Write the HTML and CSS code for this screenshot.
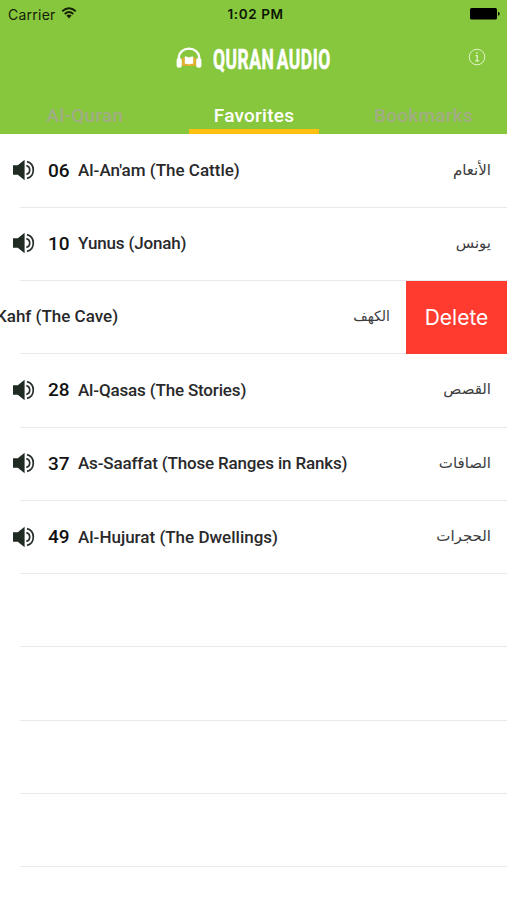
FILE: index.html
```html
<!DOCTYPE html>
<html lang="en">
<head>
<meta charset="utf-8">
<title>Quran Audio</title>
<link rel="stylesheet" href="styles.css">
</head>
<body>
<svg width="0" height="0" class="defs">
  <symbol id="speaker" viewBox="0 0 24 24">
    <path fill="#202b24" d="M1 7.300h4.800L12.600 1.800v20.400L5.800 16.700H1z"/>
    <path fill="none" stroke="#27302b" stroke-width="1.700" d="M14.300 7.600q3.400.8 3.400 4.400t-3.400 4.400M15 3.600q6.300 1.700 6.300 8.400t-6.300 8.400"/>
  </symbol>
</svg>
<header class="header">
  <div class="status">
    <div class="carrier">Carrier
      <svg width="16" height="12" viewBox="0 0 16 12"><path fill="none" stroke="#142008" stroke-width="1.900" d="M1.200 4.300Q8-1.700 14.800 4.300M3.700 7Q8 3.200 12.300 7"/><path fill="#142008" d="M5.400 8.600Q8 6.600 10.600 8.600L8 11.400z"/></svg>
    </div>
    <div class="clock">1:02 PM</div>
    <svg class="battery" width="30" height="12" viewBox="0 0 30 12"><rect width="27" height="11.500" rx="1.600"/><path d="M28 3.800q1.700.4 1.700 2t-1.700 2z"/></svg>
  </div>
  <div class="brand">
    <svg class="logo" width="26" height="22" viewBox="0 0 26 22">
      <path fill="#dfb02f" d="M6 10.500h14v8.500H6z"/>
      <path fill="#fff" d="M8.800 9.500q2.700-.3 4.200 1.200 1.500-1.500 4.200-1.200v7.300q-2.700-.3-4.200.8-1.500-1.100-4.200-.8z"/>
      <path fill="none" stroke="#fff" stroke-width="2.200" d="M2.700 13V11.500C2.700-1.600 23.300-1.600 23.300 11.500V13"/>
      <rect x=".6" y="11" width="5.200" height="9.800" rx="2.200" fill="#fff"/><rect x="20.200" y="11" width="5.200" height="9.800" rx="2.200" fill="#fff"/>
    </svg>
    <h1 class="title"><span>QURAN AUDIO</span></h1>
    <svg class="info" width="18" height="18" viewBox="0 0 18 18"><circle cx="9" cy="9" r="7.800" fill="none" stroke="#e0f2c7"/><path fill="none" stroke="#e0f2c7" stroke-width="1.300" d="M7.500 7.600h1.700v5.200M7.200 12.900h4M8.200 5h1.500"/></svg>
  </div>
  <nav class="tabs">
    <div class="tab quran"><span>Al-Quran</span></div>
    <div class="tab active"><span>Favorites</span></div>
    <div class="tab bookmarks"><span>Bookmarks</span></div>
  </nav>
</header>
<main class="list">
  <div class="row"><svg class="spk"><use href="#speaker"/></svg><b class="num">06</b><span class="name">Al-An'am (The Cattle)</span><span class="arabic" lang="ar">الأنعام</span></div>
  <div class="row"><svg class="spk"><use href="#speaker"/></svg><b class="num">10</b><span class="name tight">Yunus (Jonah)</span><span class="arabic" lang="ar">يونس</span></div>
  <div class="row swiped"><span class="name">Kahf (The Cave)</span><span class="arabic" lang="ar">الكهف</span><div class="delete">Delete</div></div>
  <div class="row"><svg class="spk"><use href="#speaker"/></svg><b class="num">28</b><span class="name tight">Al-Qasas (The Stories)</span><span class="arabic" lang="ar">القصص</span></div>
  <div class="row"><svg class="spk"><use href="#speaker"/></svg><b class="num">37</b><span class="name tight">As-Saaffat (Those Ranges in Ranks)</span><span class="arabic" lang="ar">الصافات</span></div>
  <div class="row"><svg class="spk"><use href="#speaker"/></svg><b class="num">49</b><span class="name">Al-Hujurat (The Dwellings)</span><span class="arabic" lang="ar">الحجرات</span></div>
  <div class="row"></div><div class="row"></div><div class="row"></div><div class="row"></div>
</main>
</body>
</html>
```
FILE: styles.css
```css
* { box-sizing: border-box; }
body { margin: 0; height: 900px; overflow: hidden; background: #fff; font-family: Roboto, "Liberation Sans", sans-serif; }
.defs { position: absolute; }
.header { height: 134px; background: #87c73d; }
.status { height: 28px; display: grid; grid-template-columns: 1fr auto 1fr; align-items: center; padding: 0 7px 0 8px; font-family: Inter, sans-serif; font-size: 14px; color: #142008; }
.carrier { display: flex; align-items: center; gap: 6px; letter-spacing: .25px; }
.carrier svg { margin: -2px 0 0 -1px; }
.clock { margin-left: 3px; font-weight: 600; font-size: 13.500px; letter-spacing: .6px; color: #0b1604; }
.battery { justify-self: end; }
.brand { height: 62px; display: flex; align-items: center; padding: 0 21px 0 176px; }
.logo { margin-top: -3px; }
.title { margin: 2px 0 0 11px; width: 118px; font: 700 28.500px/30px Roboto, sans-serif; color: #fff; white-space: nowrap; }
.title span { display: inline-block; letter-spacing: .9px; word-spacing: -4px; transform: scaleX(.61); transform-origin: left; -webkit-text-stroke: .6px #fff; }
.info { margin-left: auto; margin-top: -4px; }
.tabs { height: 44px; display: grid; grid-template-columns: 170px 168px 169px; justify-items: center; font-size: 19px; font-weight: 500; color: #a1ac84; }
.tab { width: 130px; height: 44px; line-height: 51px; text-align: center; letter-spacing: .25px; border-bottom: 5px solid transparent; }
.bookmarks { padding-left: 2px; }
.active { color: #fff; border-color: #fdc010; }
.list { padding-top: .4px; }
.row { display: flex; align-items: center; height: 73.300px; padding: 0 16px 2px 12px; background: linear-gradient(#e9e9eb, #e9e9eb) 20px 100% / 100% 1px no-repeat; }
.spk { width: 24px; height: 24px; flex: none; }
.num { width: 30px; margin-left: 12px; font-size: 19px; font-weight: 500; color: #111; }
.name { font-size: 17px; font-weight: 500; color: #29292b; white-space: nowrap; }
.tight { letter-spacing: -.16px; }
.arabic { margin-left: auto; padding-bottom: 1px; font: 15px/24px "DejaVu Sans", sans-serif; color: #3c3c3e; direction: rtl; }
.swiped { padding: 0; }
.swiped .name { margin-left: -4px; padding-bottom: 3px; }
.swiped .arabic { padding-bottom: 3px; font-size: 14px; }
.delete { margin-left: 16px; width: 101px; align-self: stretch; display: flex; align-items: center; justify-content: center; background: #ff3b30; color: #fff; font: 21px Inter, sans-serif; }
```
